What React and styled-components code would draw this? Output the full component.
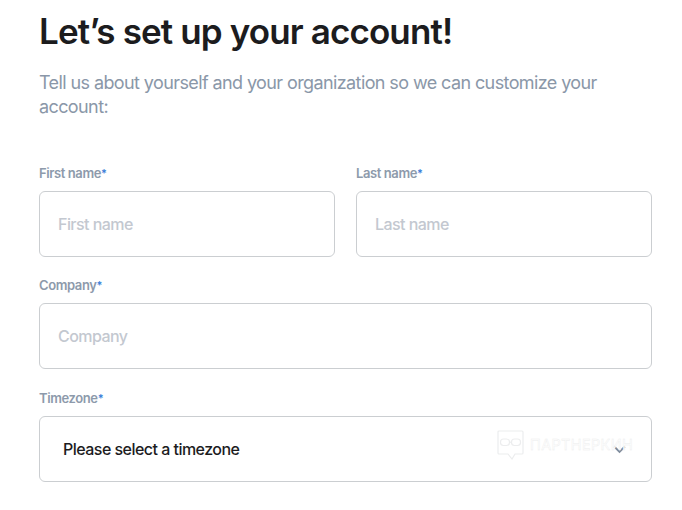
import React from 'react';
import styled, { createGlobalStyle } from 'styled-components';

const Global = createGlobalStyle`
  html, body { margin: 0; padding: 0; background: #fff; }
  body { font-family: "Inter", "Liberation Sans", sans-serif; }
  input::placeholder { color: #c3c8d0; opacity: 1; }
`;
const Page = styled.main`
  box-sizing: border-box; width: 682px; height: 510px; overflow: hidden;
  padding: 9px 30px 0 39px; display: flex; flex-direction: column;
`;
const Title = styled.h1`
  margin: 0; font-size: 35px; line-height: 44px; font-weight: 600; color: #1c1c1e; letter-spacing: -0.88px;
`;
const Intro = styled.p`
  margin: 18px 0 0; font-size: 18px; line-height: 24px; font-weight: 400; color: #8a97a8; letter-spacing: -0.6px;
`;
const Form = styled.form`
  margin-top: 46px; display: flex; flex-direction: column; gap: 20px;
`;
const Row = styled.div` display: flex; gap: 21px; `;
const Field = styled.div`
  flex: 1; min-width: 0; display: flex; flex-direction: column; gap: 10px;
  margin-top: ${p => p.$offset || 0}px;
`;
const Label = styled.label`
  display: block; height: 16px; font-size: 13px; line-height: 16px; font-weight: 600; color: #8d9aab; letter-spacing: -0.4px;
`;
const Star = styled.span`
  color: #3b7fd9; font-size: 11px; line-height: 0; vertical-align: 1px;
`;
const Input = styled.input`
  box-sizing: border-box; width: 100%; height: 66px; padding: 0 18px; border: 1px solid #cbced1; border-radius: 6px;
  background: #fff; font: 500 16px "Inter", sans-serif; letter-spacing: -0.55px; color: #1c1c1e; outline: none;
`;
const Select = styled.div`
  position: relative; box-sizing: border-box; height: 66px; padding: 0 23px; border: 1px solid #cbced1; border-radius: 6px;
  display: flex; align-items: center; justify-content: space-between; background: #fff;
`;
const Value = styled.span`
  font-size: 16px; font-weight: 500; color: #1c1c1e; letter-spacing: -0.53px;
`;
const Chevron = styled.svg` width: 13px; height: 9px; margin-right: 2px; margin-top: 1px; `;
const Watermark = styled.div`
  position: absolute; left: 457px; top: 13px; display: flex; align-items: flex-start; gap: 6px; pointer-events: none;
`;
const MarkText = styled.span`
  font: 400 14.5px/30px "Inter", sans-serif; letter-spacing: 0.35px; color: #fff; -webkit-text-stroke: 0.4px #eceded;
`;

const Req = ({ children, htmlFor }) => <Label htmlFor={htmlFor}>{children}<Star>*</Star></Label>;

export default function App() {
  return (
    <Page>
      <Global />
      <Title>Let’s set up your account!</Title>
      <Intro>Tell us about yourself and your organization so we can customize your account:</Intro>
      <Form>
        <Row>
          <Field><Req htmlFor="f">First name</Req><Input id="f" placeholder="First name" /></Field>
          <Field><Req htmlFor="l">Last name</Req><Input id="l" placeholder="Last name" /></Field>
        </Row>
        <Field><Req htmlFor="c">Company</Req><Input id="c" placeholder="Company" /></Field>
        <Field $offset={1}>
          <Req>Timezone</Req>
          <Select>
            <Value>Please select a timezone</Value>
            <Chevron viewBox="0 0 13 9" fill="none" stroke="#7f8c9c" strokeWidth="1.9"><path d="M1.2 1.5l5.3 5.3 5.3-5.3" /></Chevron>
            <Watermark>
              <svg width="27" height="30" viewBox="0 0 27 30" fill="none" stroke="#ecedee" strokeWidth="1.2">
                <path d="M2 1h23a1 1 0 0 1 1 1v21a1 1 0 0 1-1 1H18l-3 5-4-5H2a1 1 0 0 1-1-1V2a1 1 0 0 1 1-1z" />
                <rect x="3.5" y="9" width="9" height="6.5" rx="3" />
                <rect x="14.5" y="9" width="9" height="6.5" rx="3" />
                <path d="M12.5 12.2h2" />
              </svg>
              <MarkText>ПАРТНЕРКИН</MarkText>
            </Watermark>
          </Select>
        </Field>
      </Form>
    </Page>
  );
}
